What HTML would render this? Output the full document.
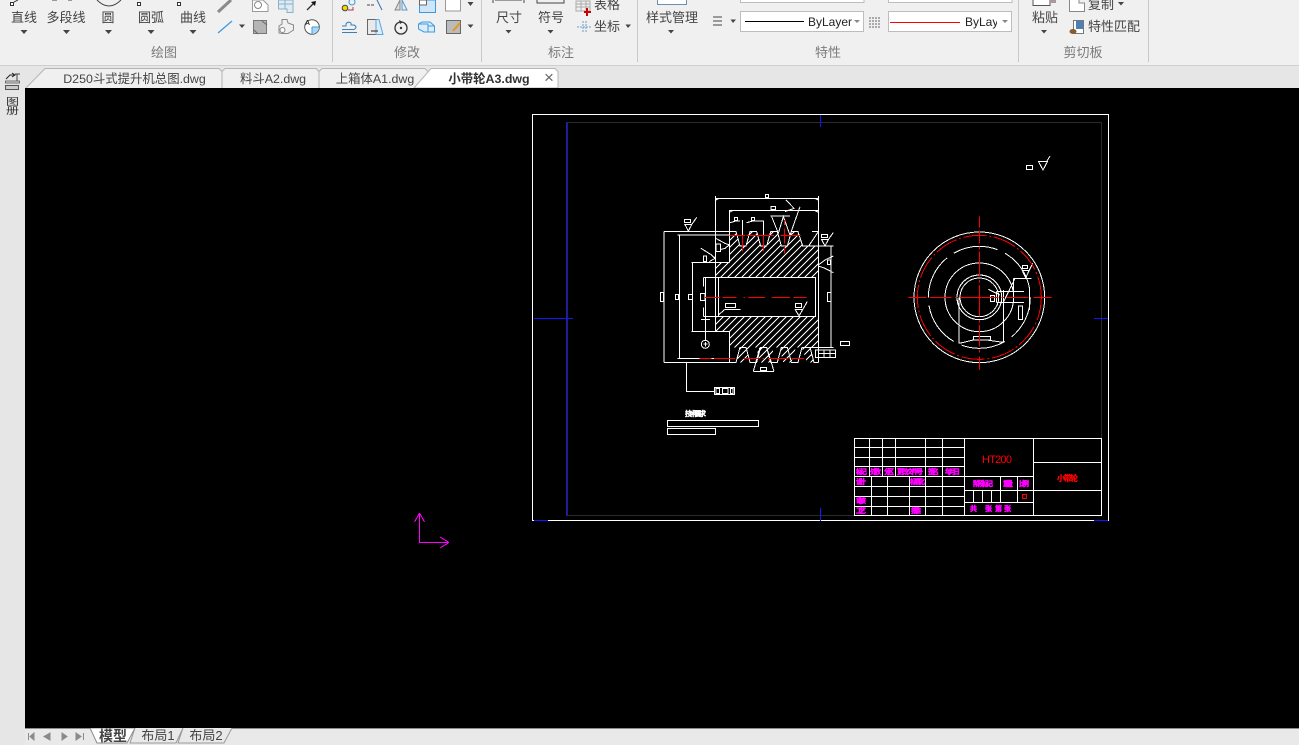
<!DOCTYPE html>
<html lang="zh">
<head>
<meta charset="utf-8">
<title>小带轮A3.dwg</title>
<style>
html,body{margin:0;padding:0;background:#000;}
#p{position:relative;width:1299px;height:745px;overflow:hidden;background:#f0f0f0;font-family:"Liberation Sans","Noto Sans CJK SC",sans-serif;color:#444;font-size:13px;}
.t{position:absolute;white-space:nowrap;transform:translateX(-50%);line-height:16px;}
.l{position:absolute;white-space:nowrap;line-height:16px;}
.g{color:#7a7a7a;}
.d{font-size:12.4px;}
.a{position:absolute;left:0;top:0;}
.box{position:absolute;background:#fff;border:1px solid #bdbdbd;box-sizing:border-box;height:21px;}
</style>
</head>
<body>
<div id="p">
<!-- ribbon background and structural areas -->
<div style="position:absolute;left:0;top:65px;width:1299px;height:1px;background:#cfcfcf"></div>
<div style="position:absolute;left:0;top:66px;width:1299px;height:22px;background:#e6e6e6"></div>
<div style="position:absolute;left:0;top:66px;width:25px;height:679px;background:#e6e6e6"></div>
<div style="position:absolute;left:25px;top:88px;width:1274px;height:640px;background:#000"></div>
<div style="position:absolute;left:25px;top:728px;width:1274px;height:17px;background:#e9e9e9;border-top:1px solid #8c8c8c;box-sizing:border-box"></div>

<!-- ribbon icons -->
<svg class="a" width="1299" height="66" viewBox="0 0 1299 66" fill="none">
<g stroke="#c9c9c9"><path d="M332.5 0V62M481.5 0V62M637.5 0V62M1018.5 0V62M1148.5 0V62"/></g>
<g stroke="#333" fill="#fff"><rect x="10.5" y="2.5" width="3" height="3"/><rect x="137.5" y="2.5" width="3" height="3"/><rect x="177.5" y="2.5" width="3" height="3"/></g>
<path d="M14 2L18 0M52 0H57M68 0H72M97 0Q109 12 121 0" stroke="#444"/>
<path d="M218 12L231 0" stroke="#8a8a8a" stroke-width="3"/>
<path d="M218 33L232 21" stroke="#3c9be0" stroke-width="1.3"/>
<path d="M252.500 0H263L268 5V11.500H252.500Z" stroke="#999" fill="#fff"/><circle cx="258" cy="5" r="3.500" stroke="#888"/>
<path d="M278.500 0H293V12.500H287V9H278.500ZM278.500 4H293M285 0V9" stroke="#8ab0cc" fill="#dfeaf3"/>
<path d="M307 10L313 4" stroke="#333" stroke-width="1.300"/><path d="M311 2L316 1L315 6Z" fill="#111"/>
<rect x="253.500" y="20.500" width="13" height="13" fill="#b5b5b5" stroke="#777"/>
<path d="M254 30L258 34M262 21L267 25" stroke="#666"/>
<path d="M282 19.500H287L288 23L293.500 25V30L288 33.500H282L279 33V26L282 24Z" stroke="#888" fill="#f0f0f0"/><circle cx="282.500" cy="30" r="2.500" stroke="#888" fill="#fff"/>
<circle cx="312" cy="27" r="7.300" stroke="#555" fill="#fff"/><path d="M312 27H319A7 7 0 0 1 312 34Z" fill="#a9d8f5"/><path d="M312 27V34M312 27H319" stroke="#3c9be0"/>
<text x="305" y="25" font-size="7" font-weight="bold" font-family="Liberation Sans" fill="#333">A</text>
<circle cx="345" cy="8" r="2.800" fill="#f5d800" stroke="#444"/><circle cx="352" cy="2" r="3" stroke="#3c9be0"/><path d="M348 10H353V7" stroke="#b33"/>
<path d="M367 5H375" stroke="#445" stroke-dasharray="3 1"/><path d="M377 0L382 10" stroke="#2f6fae"/>
<path d="M400 0L395 10H400Z" stroke="#888" fill="#ddd"/><path d="M402 0L407 10H402Z" stroke="#5a9bc9" fill="#dcecf8"/>
<path d="M419.500 0H435.500V12.500H419.500Z" stroke="#3c9be0" fill="#cfe6f8"/><rect x="419.500" y="0" width="7" height="5" fill="#fff" stroke="#666"/>
<rect x="445.500" y="-1" width="15" height="12" stroke="#999" fill="#fff"/>
<path d="M342 32.500H357M342 29.500H354Q358 27 354 25H351V23Q348 21 346 24V26H342" stroke="#3a7fb5"/>
<rect x="367.500" y="19.500" width="9" height="15" stroke="#666" fill="#e9e9e9"/><path d="M376 19.500H379L383 34.500H376Z" stroke="#5aa6de" fill="#dcecf8"/><path d="M371 31H378" stroke="#222"/>
<circle cx="401" cy="28" r="6" stroke="#333" stroke-width="1.300"/><circle cx="401" cy="28" r="1.200" fill="#333"/><path d="M399 20L403 22L400 24" fill="#333"/>
<path d="M418.500 24L422 22H430L434.500 26V32H424L418.500 29ZM418.500 24H428V32M428 26H434" stroke="#3c9be0" fill="#dcecf8"/>
<rect x="446.500" y="20.500" width="14" height="13" fill="#bbb" stroke="#666"/><path d="M453 31L460 23" stroke="#e39a1c" stroke-width="2"/>
<path d="M493 0V3M524 0V3M495 0H522M537 0V3H564V0" stroke="#444"/>
<path d="M576 1H590V11H576ZM576 4H590M576 7H590M581 1V11M586 1V11" stroke="#aaa"/><path d="M587 8V16M584 12H591" stroke="#c00" stroke-width="2"/>
<path d="M577 27H591M583 21V33M586 21V33" stroke="#6b9ec4" stroke-dasharray="2 1"/>
<path d="M657.500 0V4.500H686.500V0" stroke="#6b8fae" fill="#fff"/>
<path d="M713 17H722M713 21H722M713 25H722" stroke="#444"/>
<path d="M869 18H881M869 21H881M869 24H881M869 27H881" stroke="#666" stroke-dasharray="2 1"/>
<path d="M740.500 0V2.500H864V0M888.500 0V2.500H1012V0" stroke="#bdbdbd" fill="#fff"/>
<path d="M1033 0V5.500H1050V0" stroke="#555" fill="#fff"/><rect x="1050" y="0" width="6" height="3" fill="#a99"/>
<path d="M1069.500 0V11.500H1084.500V3H1079V0" stroke="#888" fill="#fff"/>
<rect x="1073.500" y="20.500" width="10" height="13" stroke="#777" fill="#fff"/><rect x="1076" y="21" width="7" height="8" fill="#4d7fb5"/><ellipse cx="1073" cy="31.500" rx="3.500" ry="2.500" fill="#8a5a2b"/>
<g fill="#444">
<path d="M20.500 30H27.500L24 34ZM63 30H70L66.500 34ZM105 30H112L108.500 34ZM147.500 30H154.500L151 34ZM189.500 30H196.500L193 34ZM239 24.500H245L242 28ZM467.500 2H473.500L470.500 6ZM467.500 24.500H473.500L470.500 28ZM505.500 30H511.500L508.500 33.500ZM547.500 30H553.500L550.500 33.500ZM625.500 24.500H631L628 28ZM668 30H674L671 33.500ZM730.500 19.500H736L733 23ZM1041 30H1047L1044 33.500ZM1118 2H1124L1121 5.500Z"/>
</g>
</svg>

<!-- ribbon labels -->
<span class="t" style="left:24px;top:10px">直线</span>
<span class="t" style="left:66px;top:10px">多段线</span>
<span class="t" style="left:108px;top:10px">圆</span>
<span class="t" style="left:151px;top:10px">圆弧</span>
<span class="t" style="left:193px;top:10px">曲线</span>
<span class="t" style="left:509px;top:10px">尺寸</span>
<span class="t" style="left:551px;top:10px">符号</span>
<span class="l" style="left:594px;top:-3px">表格</span>
<span class="l" style="left:594px;top:19px">坐标</span>
<span class="t" style="left:672px;top:10px">样式管理</span>
<span class="t" style="left:1045px;top:10px">粘贴</span>
<span class="l" style="left:1088px;top:-3px">复制</span>
<span class="l" style="left:1088px;top:19px">特性匹配</span>
<span class="t g" style="left:164px;top:45px">绘图</span>
<span class="t g" style="left:407px;top:45px">修改</span>
<span class="t g" style="left:561px;top:45px">标注</span>
<span class="t g" style="left:828px;top:45px">特性</span>
<span class="t g" style="left:1083px;top:45px">剪切板</span>

<!-- property combo boxes -->
<div class="box" style="left:740px;top:11px;width:124px"></div>
<div class="box" style="left:888px;top:11px;width:124px"></div>
<div style="position:absolute;left:745px;top:21px;width:59px;height:1px;background:#000"></div>
<div style="position:absolute;left:890px;top:22px;width:70px;height:1px;background:#ff0000"></div>
<span class="l" style="left:808px;top:14px;font-size:12px;color:#222">ByLayer</span>
<span class="l" style="left:965px;top:14px;width:32px;overflow:hidden;font-size:12px;color:#222">ByLayer</span>
<svg class="a" width="1299" height="40"><path d="M854 20H860L857 23ZM1002 20H1008L1005 23Z" fill="#888"/></svg>

<!-- document tabs -->
<svg class="a" style="top:66px" width="1299" height="22">
<path d="M26 22L45 2.500H219L222 5.500L225 2.500H316L319 5.500L322 2.500H425L428 5.500V22Z" fill="#f0f0f0"/>
<path d="M26 22L45 2.500H219L222 5.500V22M222 5.500L225 2.500H316L319 5.500V22M319 5.500L322 2.500H425L428 5.500" stroke="#b5b5b5" fill="none"/>
<path d="M414 22L431 2.500H555L558 5.500V22Z" fill="#fff" stroke="#b5b5b5"/>
</svg>
<span class="t d" style="left:134.500px;top:71px">D250斗式提升机总图.dwg</span>
<span class="t d" style="left:273px;top:71px">料斗A2.dwg</span>
<span class="t d" style="left:375px;top:71px">上箱体A1.dwg</span>
<span class="t d" style="left:489px;top:71px;font-weight:bold;color:#333">小带轮A3.dwg</span>
<span class="t" style="left:549px;top:70px;font-size:17px;color:#666">×</span>

<!-- side toolbar -->
<svg class="a" width="25" height="120" fill="none">
<path d="M6 79L10 75H14M12 73L15 75L12 77" stroke="#222"/><path d="M15 74H20M17 74V81" stroke="#444"/>
<rect x="5.500" y="81" width="14" height="2" fill="#ddd" stroke="#555" stroke-width=".8"/>
<rect x="5.500" y="85.500" width="13" height="4" fill="#ccc" stroke="#555"/>
</svg>
<span class="l" style="left:6px;top:94px;font-size:13px;color:#333;transform:scaleY(.75)">图</span>
<span class="l" style="left:6px;top:103px;font-size:13px;color:#333;transform:scaleY(.75)">册</span>

<!-- drawing -->
<svg class="a" style="top:0" width="1299" height="745" shape-rendering="crispEdges" fill="none">
<defs>
<pattern id="h" patternUnits="userSpaceOnUse" width="21" height="21"><path d="M0 21L21 0M-5 5L5 -5M16 26L26 16" stroke="#fff" stroke-width="2.500"/></pattern>
</defs>
<!-- sheet frames -->
<rect x="532.500" y="114.500" width="576" height="406" stroke="#fff"/>
<rect x="567.500" y="122.500" width="534" height="393" stroke="#2a2a2a"/>
<path d="M566.500 122V516M534 318.500H573M1094 318.500H1108M820.500 115V127M820.500 508V521M534 520.500H548M1094 520.500H1108" stroke="#1414ff"/>

<!-- front view, coordinates in 3x space -->
<g transform="translate(650 180) scale(.33333)" stroke="#fff" stroke-width="3">
<path fill="url(#h)" stroke="none" d="M197 247H238V160H258L270 198H288L300 155H320L332 198H350L362 155H382L394 198H412L424 155H444L458 198H505V292H197Z"/>
<path fill="url(#h)" stroke="none" d="M197 410H505V502H480L492 547H470L456 502H438L424 547H400L388 502H372L360 547H330L318 502H300L286 547H258L270 502H238V547H238V455H197Z"/>
<path d="M42 155V547M42 155H238M42 547H238M88 165V535M82 165H238M82 535H238M128 247V455M124 247H238M124 455H238M238 90V247M238 455V547M197 48V455M505 48V547"/>
<path d="M197 55H505M238 92H505M197 60L207 55M505 60L495 55M238 97L248 92M505 97L495 92"/>
<path d="M160 292H497V410H160M167 292V410M205 292V410M197 292V410M497 292V410M160 292V320M160 382V410"/>
<path d="M238 155H258L270 198H288L300 155H320L332 198H350L362 155H382L394 198H412L424 155H444L458 198H550M486 155H505L476 198"/>
<path d="M238 547H258L270 502H288L300 547H320L332 502H350L362 547H382L394 502H412L424 547H444L456 502H550M480 502L492 547H505"/>
<path d="M543 198V502"/>
<path d="M240 128L258 123H270M277 120V165M290 128L309 123H340V215M277 165V215"/>
<path d="M365 110L385 160L400 110L420 165M450 80L420 165M408 60L432 85L405 95M362 108H420"/>
<path d="M197 175L225 190L238 195L225 205L197 212"/>
<path d="M153 205L185 225L195 235L178 245M197 240L195 230"/>
<path d="M505 255L525 240L550 228M505 258L525 265L550 278"/>
<path d="M225 388H272M225 388L205 405"/>
<path d="M110 547V634H193M166 410V480M153 419H180"/>
<circle cx="166" cy="493" r="12"/>
<path d="M310 574L330 502M372 574L350 502M310 574H372"/>
<!-- roughness marks -->
<rect x="103" y="118" width="18" height="10"/><path d="M105 134H125L115 153ZM125 134L140 112"/>
<rect x="515" y="163" width="18" height="10"/><path d="M515 179H535L525 198ZM535 179L550 157"/>
<rect x="436" y="370" width="19" height="13"/><path d="M436 389H458L447 408ZM458 389L472 364"/>
<!-- boxed annotations -->
<g fill="#000">
<rect x="346" y="43" width="10" height="10"/><rect x="363" y="79" width="14" height="10"/><rect x="253" y="112" width="10" height="10"/><rect x="304" y="112" width="10" height="10"/>
<rect x="31" y="337" width="10" height="28"/><rect x="76" y="343" width="10" height="15"/><rect x="115" y="343" width="13" height="15"/><rect x="151" y="340" width="14" height="22"/>
<rect x="532" y="337" width="11" height="28"/><rect x="571" y="484" width="28" height="13"/><rect x="226" y="370" width="31" height="13"/>
<rect x="198" y="192" width="14" height="23"/><rect x="160" y="228" width="10" height="17"/><rect x="532" y="240" width="10" height="14"/><rect x="331" y="562" width="19" height="10"/>
<rect x="497" y="510" width="60" height="23"/><rect x="193" y="622" width="60" height="21"/>
</g>
<path d="M505 512V531M522 512V531M540 512V531M505 521H557M198 626V640H208V626ZM218 626V640H234V626ZM241 626V640H249V626Z"/>
<path d="M160 492H172M166 486V500"/>
</g>
<g transform="translate(650 180) scale(.33333)" stroke="#f00" stroke-width="3">
<path d="M165 352H210M218 352H260M280 352H285M295 352H345M365 352H420M430 352H470"/>
<path d="M238 166H285M290 166H372M392 166H452"/>
<path d="M148 535H185M192 535H255M280 535H328M338 535H342M354 535H415M425 535H462"/>
<path d="M277 165V215M340 165V215M403 120V135M403 145V190M403 198V220"/>
</g>

<!-- side view -->
<g transform="translate(900 210) scale(.33333)" stroke="#fff" stroke-width="3">
<circle cx="238" cy="262" r="196"/>
<circle cx="238" cy="262" r="153" stroke-dasharray="135 25"/>
<circle cx="238" cy="262" r="103"/>
<circle cx="238" cy="262" r="67"/>
<circle cx="238" cy="262" r="58"/>
<path d="M177 262V400M310 240V398M178 400L220 390H260L310 397M220 380H272V390H220ZM290 245H372M290 277H372M340 205V277M340 205H395M265 238L300 255M310 277L345 205M388 235V300M290 245V277"/>
<rect x="271" y="256" width="13" height="18"/><rect x="355" y="288" width="12" height="40"/><rect x="367" y="167" width="15" height="9"/>
<path d="M367 182H387L377 204ZM387 182L398 160"/>
</g>
<g transform="translate(900 210) scale(.33333)" stroke="#f00" stroke-width="3">
<circle cx="238" cy="262" r="186" stroke-dasharray="70 8 6 8"/>
<path d="M25 262H80M90 262H155M165 262H172M180 262H295M305 262H312M320 262H385M400 262H455M238 20V52M238 62V100M238 110V118M238 125V200M238 210V218M238 225V320M238 330V338M238 345V410M238 420V428M238 440V480"/>
</g>

<!-- upper right symbol -->
<path d="M1026.500 165.500H1032.500V169.500H1026.500ZM1038.500 161.500H1047.500L1043 170ZM1047 161L1050 156" stroke="#fff"/>

<!-- technical notes -->
<rect x="667.500" y="420.500" width="91" height="6" stroke="#fff"/>
<rect x="667.500" y="428.500" width="48" height="6" stroke="#fff"/>

<!-- title block -->
<g stroke="#fff">
<rect x="854.500" y="438.500" width="247" height="77"/>
<path d="M964.500 438V515M1033.500 438V515M1033 462.500H1101M1033 490.500H1101M964 476.500H1033M964 490.500H1033M964 502.500H1033M1000.500 476V502M1017.500 476V502M973.500 490V502M982.500 490V502M991.500 490V502"/>
<path d="M855 447.500H964M855 457.500H964M855 466.500H964M855 476.500H964M855 486.500H964M855 496.500H964M855 506.500H964"/>
<path d="M869.500 438V476M882.500 438V476M895.500 438V476M925.500 438V515M942.500 438V515M871.500 476V515M887.500 476V515M909.500 476V515"/>
</g>
<rect x="1022.500" y="494.500" width="4" height="4" stroke="#f00"/>

<!-- UCS icon -->
<path d="M419.500 513V542.500H449M419.500 513L414.500 522M419.500 513L424.500 522M449 542.500L440 537M449 542.500L440 548" stroke="#f0f"/>
</svg>

<svg class="a" width="1299" height="745" font-family="'Liberation Sans','Noto Sans CJK SC',sans-serif">
<text x="685" y="416" font-size="7" font-weight="bold" fill="#fff" stroke="#fff" stroke-width=".4" textLength="21">技术要求</text>
<text x="982" y="463" font-size="11" fill="#f00" textLength="30">HT200</text>
<text x="1057" y="481" font-size="8" font-weight="bold" fill="#f00" stroke="#f00" stroke-width=".3" textLength="21">小带轮</text>
<g font-size="7" font-weight="bold" fill="#f0f" stroke="#f0f" stroke-width=".5">
<text x="856" y="474" textLength="11">标记</text>
<text x="870" y="474" textLength="11">处数</text>
<text x="884" y="474" textLength="10">分区</text>
<text x="897" y="474" textLength="26">更改文件号</text>
<text x="928" y="474" textLength="11">签名</text>
<text x="945" y="474" textLength="15">年月日</text>
<text x="856" y="484" textLength="10">设计</text>
<text x="910" y="484" textLength="15">标准化</text>
<text x="856" y="503" textLength="10">审核</text>
<text x="856" y="513" textLength="10">工艺</text>
<text x="911" y="513" textLength="10">批准</text>
<text x="973" y="486" textLength="20">阶段标记</text>
<text x="1003" y="486" textLength="10">重量</text>
<text x="1019" y="486" textLength="10">比例</text>
<text x="970" y="511" textLength="6">共</text>
<text x="985" y="511" textLength="6">张</text>
<text x="995" y="511" textLength="6">第</text>
<text x="1004" y="511" textLength="6">张</text>
</g>
</svg>

<!-- layout tabs -->
<svg class="a" style="top:728px" width="260" height="17">
<path d="M90 0L97 15H127L135 0Z" fill="#fff" stroke="#8a8a8a"/>
<path d="M135 0L130 15H176L183 0M183 0L178 15H224L232 0" fill="#e9e9e9" stroke="#9a9a9a"/>
<path d="M28.500 5V12M34 5L30 8.500L34 12ZM50 5L44 8.500L50 12ZM62 5L67 8.500L62 12ZM76 5L81 8.500L76 12ZM83.500 5V12" fill="#8a8a8a" stroke="#8a8a8a"/>
</svg>
<span class="t" style="left:113px;top:728px;font-size:14px;font-weight:bold">模型</span>
<span class="t" style="left:158px;top:728px;font-size:13px">布局1</span>
<span class="t" style="left:206px;top:728px;font-size:13px">布局2</span>
</div>
</body>
</html>
